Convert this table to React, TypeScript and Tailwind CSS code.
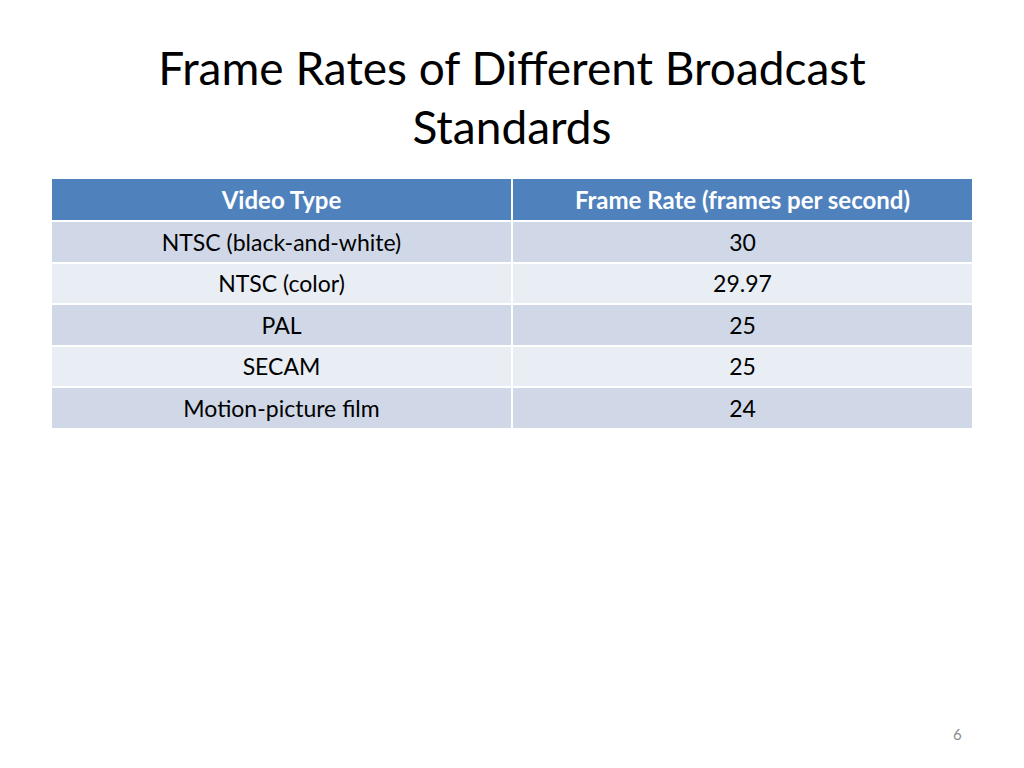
import React from "react";

const rows: [string, string][] = [
  ["NTSC (black-and-white)", "30"],
  ["NTSC (color)", "29.97"],
  ["PAL", "25"],
  ["SECAM", "25"],
  ["Motion-picture film", "24"],
];

export default function App() {
  return (
    <div
      className="relative w-[1024px] h-[768px] bg-white overflow-hidden"
      style={{ fontFamily: "Lato, 'Open Sans', sans-serif" }}
    >
      <div className="pt-[38px] flex justify-center">
        <h1 className="text-center text-[46px] leading-[59px] text-black w-[760px]">
          Frame Rates of Different Broadcast Standards
        </h1>
      </div>
      <div className="mt-[23px] mx-[52px] w-[920px]">
        <div className="grid grid-cols-[461px_459px] h-[41px] bg-[#4f81bd]">
          <div className="flex items-center justify-center text-white font-bold text-[24px] border-r-2 border-white">
            Video Type
          </div>
          <div className="flex items-center justify-center text-white font-bold text-[24px]">
            Frame Rate (frames per second)
          </div>
        </div>
        {rows.map(([a, b], i) => (
          <div
            key={a}
            className={`grid grid-cols-[461px_459px] h-[41.6px] border-t-2 border-white ${
              i % 2 === 0 ? "bg-[#d0d8e8]" : "bg-[#e9edf4]"
            }`}
          >
            <div className="flex items-center justify-center text-black text-[23px] border-r-2 border-white">
              {a}
            </div>
            <div className="flex items-center justify-center text-black text-[23px]">
              {b}
            </div>
          </div>
        ))}
      </div>
      <div className="absolute left-[953px] top-[723px] text-[15px] text-[#8c8c8c]">6</div>
    </div>
  );
}
